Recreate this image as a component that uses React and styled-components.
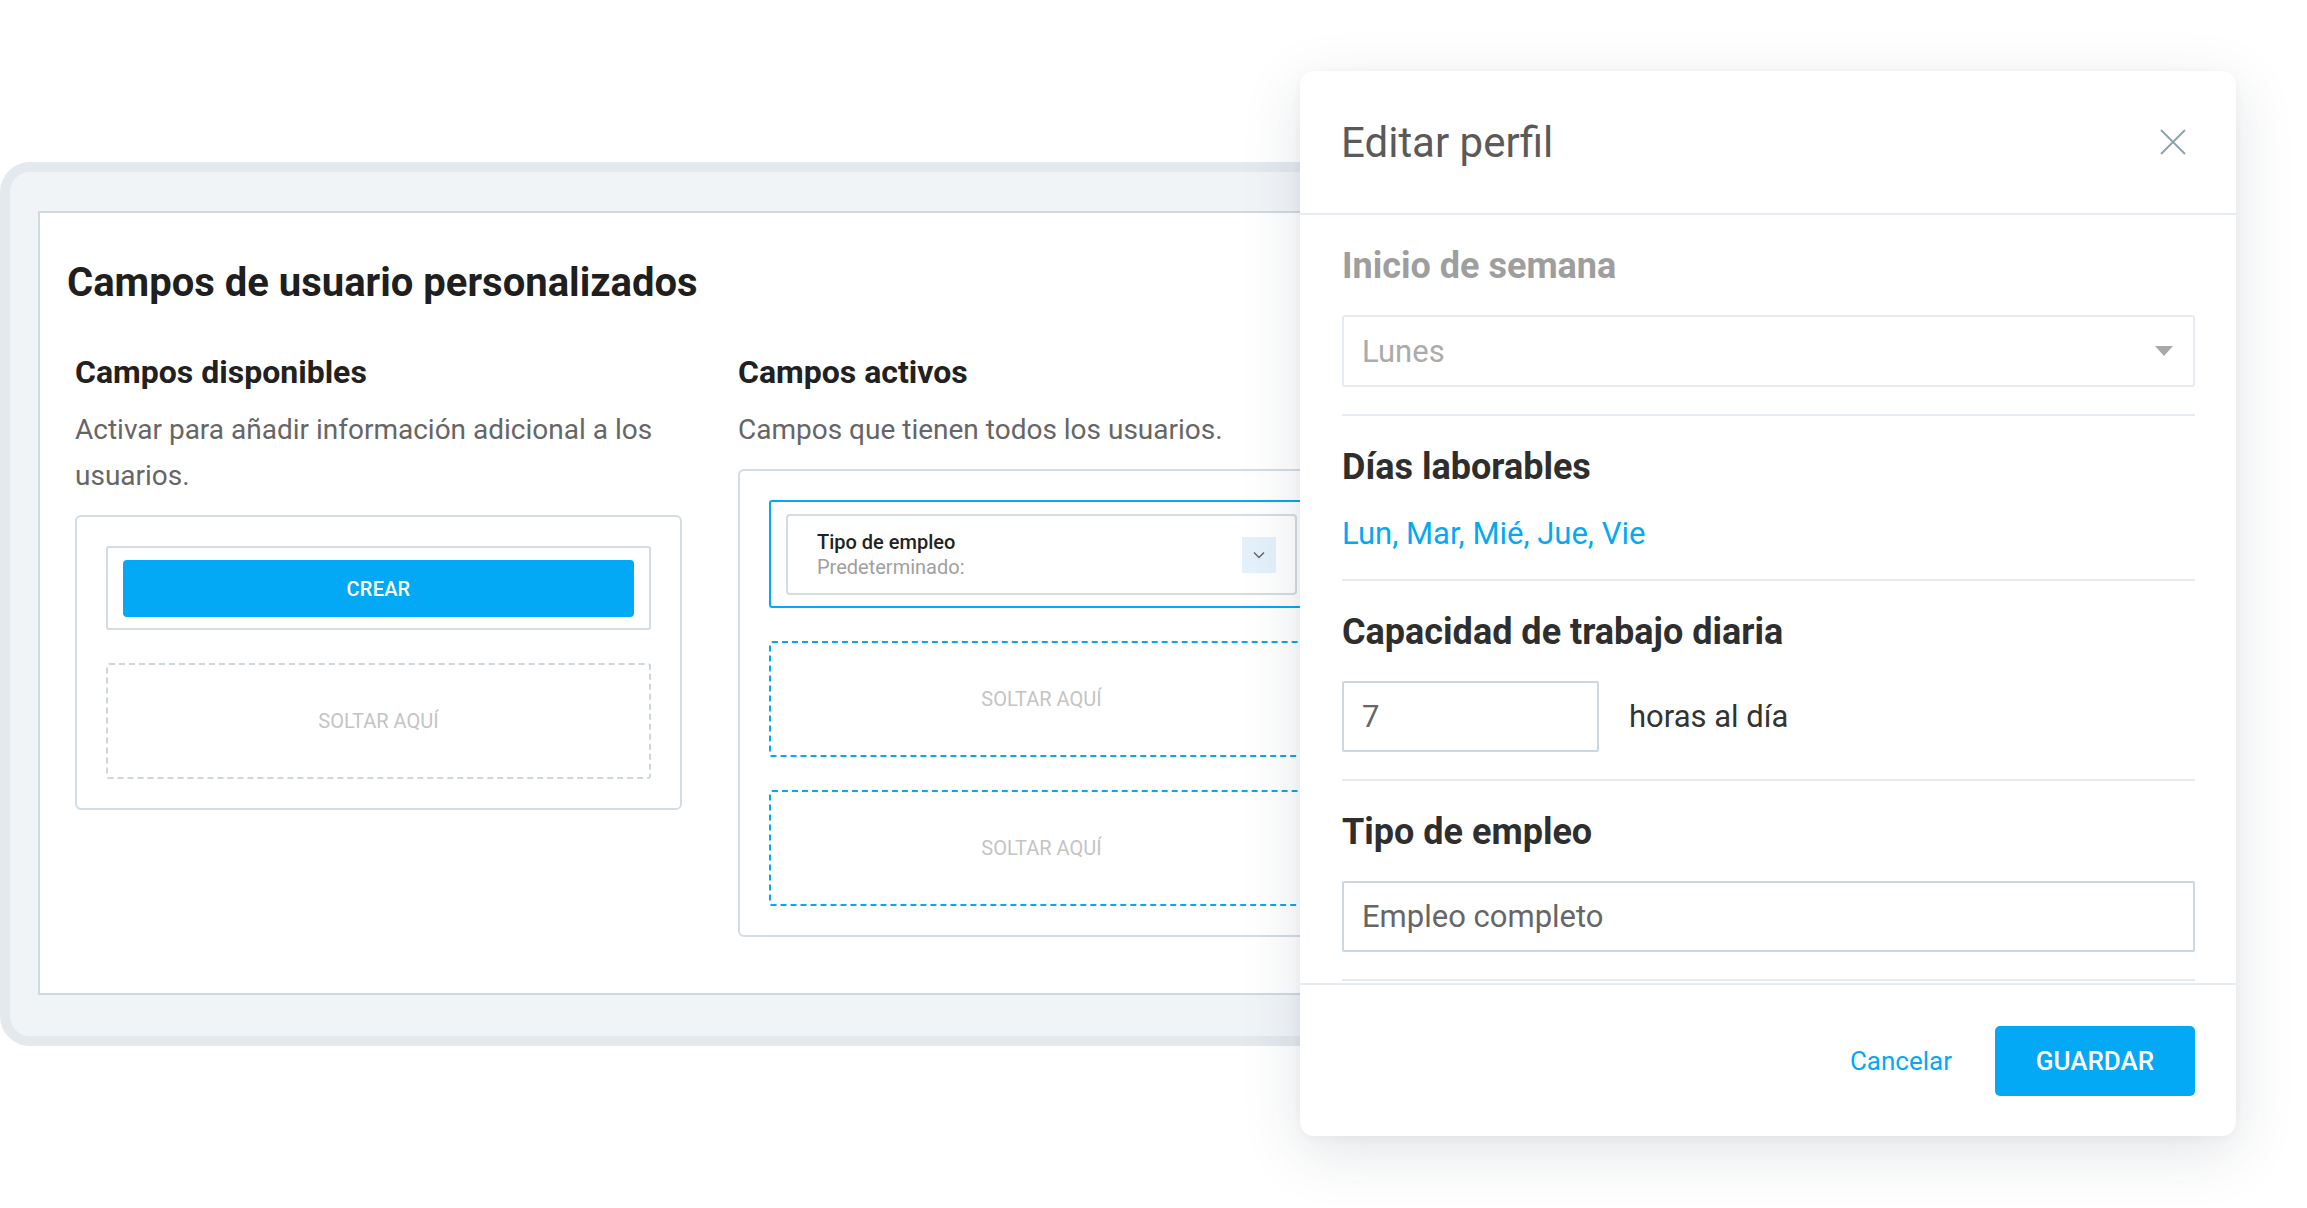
import React from "react";
import styled, { createGlobalStyle } from "styled-components";

const blue = "#03a9f4";
const boxLine = "#d3dce3";
const softLine = "#e5ebf0";

const GlobalStyle = createGlobalStyle`
  html, body {
    margin: 0;
    padding: 0;
    background: #fff;
  }
  body {
    font-family: Roboto, "Liberation Sans", Arial, sans-serif;
    -webkit-font-smoothing: antialiased;
  }
  * {
    box-sizing: border-box;
  }
`;

const Stage = styled.div`
  position: relative;
  width: 2307px;
  height: 1208px;
  overflow: hidden;
  padding-top: 162px;
`;

/* back window with the custom fields page */
const AppWindow = styled.div`
  width: 1420px;
  height: 884px;
  border: 10px solid #e4e9ee;
  border-radius: 30px;
  background: #f1f4f7;
  padding: 39px 0 41px 28px;
`;

const Card = styled.div`
  height: 100%;
  background: #fff;
  border: 2px solid #cfd9e0;
  border-right: none;
  padding: 46px 0 0 27px;
`;

const PageTitle = styled.h1`
  margin: 0;
  font-size: 40px;
  line-height: 48px;
  font-weight: 700;
  color: #1f1f1f;
`;

const Columns = styled.div`
  display: grid;
  grid-template-columns: 607px 607px;
  column-gap: 56px;
  align-items: start;
  margin: 47px 0 0 8px;
`;

const Column = styled.div`
  display: flex;
  flex-direction: column;
`;

const ColTitle = styled.h2`
  margin: 0;
  font-size: 32px;
  line-height: 36px;
  font-weight: 700;
  color: #212121;
`;

const ColText = styled.p`
  margin: 17px 0 16px;
  font-size: 28px;
  line-height: 46px;
  color: #666;
`;

const FieldBox = styled.div`
  display: flex;
  flex-direction: column;
  gap: 33px;
  padding: 29px;
  border: 2px solid ${boxLine};
  border-radius: 6px;
`;

const Slot = styled.div`
  padding: 12px 15px 11px;
  border: 2px solid ${(p) => (p.$active ? blue : boxLine)};
  border-radius: 3px;
`;

const CreateButton = styled.button`
  display: block;
  width: 100%;
  height: 57px;
  border: none;
  border-radius: 4px;
  background: ${blue};
  color: #fff;
  font-family: inherit;
  font-size: 20px;
  font-weight: 500;
  letter-spacing: 0.2px;
`;

const DropZone = styled.div`
  height: 116px;
  display: flex;
  align-items: center;
  justify-content: center;
  border: 2px dashed ${(p) => (p.$active ? blue : "#cdd6dd")};
  border-radius: 3px;
  font-size: 20px;
  color: #c4c4c4;
`;

const FieldCard = styled.div`
  height: 81px;
  display: flex;
  align-items: center;
  justify-content: space-between;
  padding: 0 19px 0 29px;
  border: 2px solid ${boxLine};
  border-radius: 4px;
`;

const FieldName = styled.div`
  font-size: 20px;
  line-height: 25px;
  font-weight: 500;
  color: #222;
`;

const FieldDefault = styled.div`
  font-size: 20px;
  line-height: 25px;
  color: #a0a0a0;
`;

const ChevronBox = styled.div`
  width: 34px;
  height: 36px;
  display: flex;
  align-items: center;
  justify-content: center;
  background: #e3f1fc;
`;

/* edit profile dialog lying over the page */
const Modal = styled.div`
  position: absolute;
  left: 1300px;
  top: 71px;
  width: 936px;
  height: 1065px;
  display: flex;
  flex-direction: column;
  overflow: hidden;
  background: #fff;
  border-radius: 14px;
  box-shadow: 0 16px 60px rgba(30, 50, 70, 0.13), 0 2px 10px rgba(30, 50, 70, 0.04);
`;

const ModalHeader = styled.div`
  flex: none;
  height: 144px;
  display: flex;
  align-items: center;
  justify-content: space-between;
  padding: 0 50px 0 41px;
  border-bottom: 2px solid ${softLine};
`;

const ModalTitle = styled.h3`
  margin: 0;
  font-size: 42px;
  font-weight: 400;
  color: #5a5a5a;
`;

const CloseButton = styled.button`
  width: 26px;
  height: 26px;
  padding: 0;
  border: none;
  background: none;
  display: flex;
`;

const ModalBody = styled.div`
  flex: none;
  height: 768px;
  overflow: hidden;
  padding: 0 41px 0 42px;
`;

const Section = styled.div`
  display: flex;
  flex-direction: column;
  gap: 28px;
  padding: 30px 0 27px;
  border-bottom: 2px solid ${softLine};
`;

const SectionTitle = styled.div`
  font-size: 36px;
  line-height: 42px;
  font-weight: 700;
  color: ${(p) => p.$color || "#2e2e2e"};
`;

const Select = styled.div`
  height: 72px;
  display: flex;
  align-items: center;
  justify-content: space-between;
  padding: 0 20px 0 18px;
  border: 2px solid ${softLine};
  border-radius: 3px;
  font-size: 31px;
  color: #ababab;
`;

const Caret = styled.span`
  width: 0;
  height: 0;
  border-left: 9px solid transparent;
  border-right: 9px solid transparent;
  border-top: 10px solid #a8a8a8;
`;

const Days = styled.div`
  font-size: 31px;
  line-height: 36px;
  color: ${blue};
`;

const InputRow = styled.div`
  display: flex;
  align-items: center;
  gap: 30px;
`;

const TextInput = styled.div`
  width: ${(p) => p.$width || "100%"};
  height: 71px;
  display: flex;
  align-items: center;
  padding-left: 18px;
  border: 2px solid #cdd7df;
  border-radius: 2px;
  font-size: 31px;
  color: #666;
`;

const Unit = styled.span`
  font-size: 31px;
  color: #333;
`;

const ModalFooter = styled.div`
  flex: 1;
  display: flex;
  align-items: center;
  justify-content: flex-end;
  gap: 43px;
  padding-right: 41px;
  border-top: 2px solid ${softLine};
`;

const CancelButton = styled.button`
  padding: 0;
  border: none;
  background: none;
  font-family: inherit;
  font-size: 26px;
  color: ${blue};
`;

const SaveButton = styled.button`
  width: 200px;
  height: 70px;
  border: none;
  border-radius: 5px;
  background: ${blue};
  color: #fff;
  font-family: inherit;
  font-size: 26px;
  font-weight: 500;
`;

const App = () => {
  return (
    <Stage>
      <GlobalStyle />
      <AppWindow>
        <Card>
          <PageTitle>Campos de usuario personalizados</PageTitle>
          <Columns>
            <Column>
              <ColTitle>Campos disponibles</ColTitle>
              <ColText>Activar para añadir información adicional a los usuarios.</ColText>
              <FieldBox>
                <Slot>
                  <CreateButton>CREAR</CreateButton>
                </Slot>
                <DropZone>SOLTAR AQUÍ</DropZone>
              </FieldBox>
            </Column>
            <Column>
              <ColTitle>Campos activos</ColTitle>
              <ColText>Campos que tienen todos los usuarios.</ColText>
              <FieldBox>
                <Slot $active>
                  <FieldCard>
                    <div>
                      <FieldName>Tipo de empleo</FieldName>
                      <FieldDefault>Predeterminado:</FieldDefault>
                    </div>
                    <ChevronBox>
                      <svg width="12" height="8" viewBox="0 0 12 8">
                        <path d="M1 1.5 L6 6.5 L11 1.5" fill="none" stroke="#666" strokeWidth="1.5" />
                      </svg>
                    </ChevronBox>
                  </FieldCard>
                </Slot>
                <DropZone $active>SOLTAR AQUÍ</DropZone>
                <DropZone $active>SOLTAR AQUÍ</DropZone>
              </FieldBox>
            </Column>
          </Columns>
        </Card>
      </AppWindow>

      <Modal>
        <ModalHeader>
          <ModalTitle>Editar perfil</ModalTitle>
          <CloseButton>
            <svg width="26" height="26" viewBox="0 0 26 26">
              <path d="M1 1 L25 25 M25 1 L1 25" stroke="#90a4ae" strokeWidth="2" />
            </svg>
          </CloseButton>
        </ModalHeader>
        <ModalBody>
          <Section>
            <SectionTitle $color="#9e9e9e">Inicio de semana</SectionTitle>
            <Select>
              Lunes
              <Caret />
            </Select>
          </Section>
          <Section>
            <SectionTitle>Días laborables</SectionTitle>
            <Days>Lun, Mar, Mié, Jue, Vie</Days>
          </Section>
          <Section>
            <SectionTitle>Capacidad de trabajo diaria</SectionTitle>
            <InputRow>
              <TextInput $width="257px">7</TextInput>
              <Unit>horas al día</Unit>
            </InputRow>
          </Section>
          <Section>
            <SectionTitle>Tipo de empleo</SectionTitle>
            <TextInput>Empleo completo</TextInput>
          </Section>
        </ModalBody>
        <ModalFooter>
          <CancelButton>Cancelar</CancelButton>
          <SaveButton>GUARDAR</SaveButton>
        </ModalFooter>
      </Modal>
    </Stage>
  );
};

export default App;
